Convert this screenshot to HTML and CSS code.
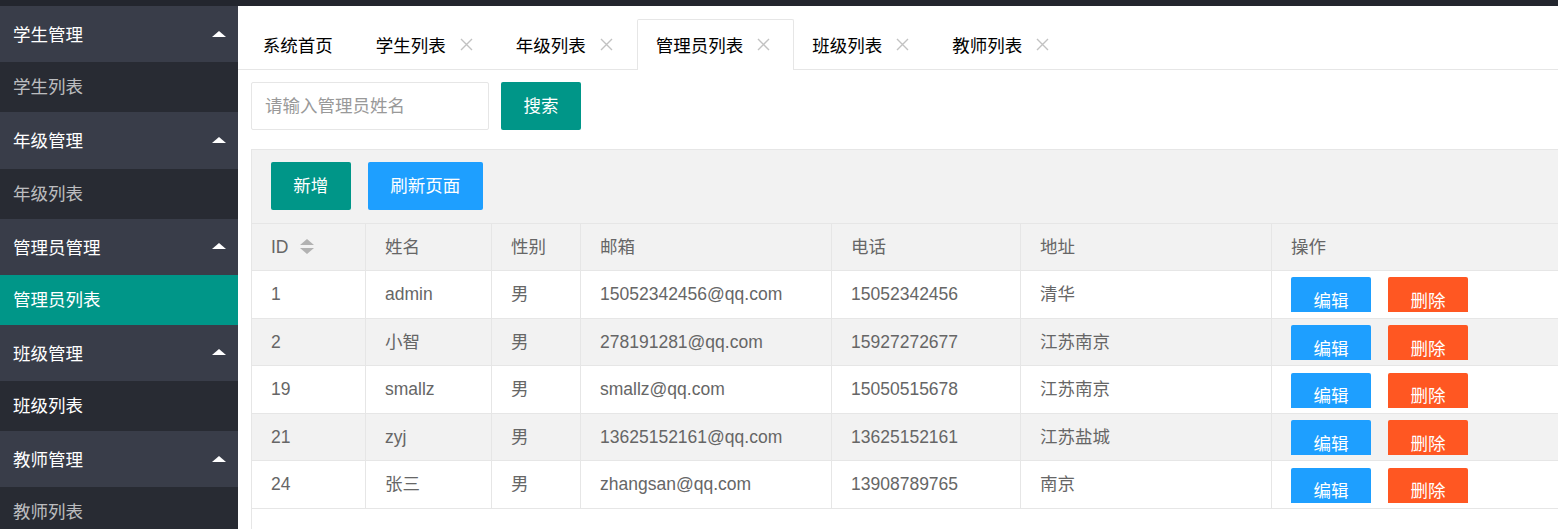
FILE: index.html
```html
<!DOCTYPE html>
<html lang="zh-CN">
<head>
    <meta charset="UTF-8">
    <title>管理员列表</title>
    <link rel="stylesheet" href="styles.css">
</head>
<body>
    <div class="topbar"></div>
    <div class="layout">
        <aside class="side">
            <div class="nav-title">学生管理<span class="caret"></span></div>
            <div class="nav-item">学生列表</div>
            <div class="nav-title">年级管理<span class="caret"></span></div>
            <div class="nav-item">年级列表</div>
            <div class="nav-title">管理员管理<span class="caret"></span></div>
            <div class="nav-item active">管理员列表</div>
            <div class="nav-title">班级管理<span class="caret"></span></div>
            <div class="nav-item hover">班级列表</div>
            <div class="nav-title">教师管理<span class="caret"></span></div>
            <div class="nav-item">教师列表</div>
        </aside>

        <main class="content">
            <ul class="tabs">
                <li class="tab tab-home">系统首页</li>
                <li class="tab">学生列表<span class="tab-close"><svg width="13" height="13" viewBox="0 0 13 13"><path d="M1 1L12 12M12 1L1 12" stroke="#c2c2c2" stroke-width="1.4" fill="none"/></svg></span></li>
                <li class="tab">年级列表<span class="tab-close"><svg width="13" height="13" viewBox="0 0 13 13"><path d="M1 1L12 12M12 1L1 12" stroke="#c2c2c2" stroke-width="1.4" fill="none"/></svg></span></li>
                <li class="tab active">管理员列表<span class="tab-close"><svg width="13" height="13" viewBox="0 0 13 13"><path d="M1 1L12 12M12 1L1 12" stroke="#c2c2c2" stroke-width="1.4" fill="none"/></svg></span></li>
                <li class="tab">班级列表<span class="tab-close"><svg width="13" height="13" viewBox="0 0 13 13"><path d="M1 1L12 12M12 1L1 12" stroke="#c2c2c2" stroke-width="1.4" fill="none"/></svg></span></li>
                <li class="tab">教师列表<span class="tab-close"><svg width="13" height="13" viewBox="0 0 13 13"><path d="M1 1L12 12M12 1L1 12" stroke="#c2c2c2" stroke-width="1.4" fill="none"/></svg></span></li>
            </ul>

            <div class="page">
                <div class="search">
                    <input class="search-input" type="text" placeholder="请输入管理员姓名">
                    <button class="btn btn-teal">搜索</button>
                </div>

                <div class="table-box">
                    <div class="toolbar">
                        <button class="btn btn-teal">新增</button>
                        <button class="btn btn-blue">刷新页面</button>
                    </div>

                    <div class="row row-head">
                        <div class="cell c-id">ID
                            <svg class="sort" width="14" height="16" viewBox="0 0 14 16"><path d="M7 0L14 6H0Z M0 9H14L7 15Z" fill="#b2b2b2"/></svg>
                        </div>
                        <div class="cell c-name">姓名</div>
                        <div class="cell c-sex">性别</div>
                        <div class="cell c-mail">邮箱</div>
                        <div class="cell c-phone">电话</div>
                        <div class="cell c-addr">地址</div>
                        <div class="cell c-ops">操作</div>
                    </div>

                    <div class="row">
                        <div class="cell c-id">1</div>
                        <div class="cell c-name">admin</div>
                        <div class="cell c-sex">男</div>
                        <div class="cell c-mail">15052342456@qq.com</div>
                        <div class="cell c-phone">15052342456</div>
                        <div class="cell c-addr">清华</div>
                        <div class="cell c-ops ops-cell"><div class="ops"><button class="btn btn-blue btn-op">编辑</button><button class="btn btn-red btn-op">删除</button></div></div>
                    </div>
                    <div class="row row-even">
                        <div class="cell c-id">2</div>
                        <div class="cell c-name">小智</div>
                        <div class="cell c-sex">男</div>
                        <div class="cell c-mail">278191281@qq.com</div>
                        <div class="cell c-phone">15927272677</div>
                        <div class="cell c-addr">江苏南京</div>
                        <div class="cell c-ops ops-cell"><div class="ops"><button class="btn btn-blue btn-op">编辑</button><button class="btn btn-red btn-op">删除</button></div></div>
                    </div>
                    <div class="row">
                        <div class="cell c-id">19</div>
                        <div class="cell c-name">smallz</div>
                        <div class="cell c-sex">男</div>
                        <div class="cell c-mail">smallz@qq.com</div>
                        <div class="cell c-phone">15050515678</div>
                        <div class="cell c-addr">江苏南京</div>
                        <div class="cell c-ops ops-cell"><div class="ops"><button class="btn btn-blue btn-op">编辑</button><button class="btn btn-red btn-op">删除</button></div></div>
                    </div>
                    <div class="row row-even">
                        <div class="cell c-id">21</div>
                        <div class="cell c-name">zyj</div>
                        <div class="cell c-sex">男</div>
                        <div class="cell c-mail">13625152161@qq.com</div>
                        <div class="cell c-phone">13625152161</div>
                        <div class="cell c-addr">江苏盐城</div>
                        <div class="cell c-ops ops-cell"><div class="ops"><button class="btn btn-blue btn-op">编辑</button><button class="btn btn-red btn-op">删除</button></div></div>
                    </div>
                    <div class="row">
                        <div class="cell c-id">24</div>
                        <div class="cell c-name">张三</div>
                        <div class="cell c-sex">男</div>
                        <div class="cell c-mail">zhangsan@qq.com</div>
                        <div class="cell c-phone">13908789765</div>
                        <div class="cell c-addr">南京</div>
                        <div class="cell c-ops ops-cell"><div class="ops"><button class="btn btn-blue btn-op">编辑</button><button class="btn btn-red btn-op">删除</button></div></div>
                    </div>
                </div>
            </div>
        </main>
    </div>
</body>
</html>
```

FILE: styles.css
```css
body {
    margin: 0;
    width: 1558px;
    height: 529px;
    overflow: hidden;
    font-family: "Liberation Sans", "Noto Sans CJK SC", sans-serif;
    font-size: 17.5px;
    background: #ffffff;
    color: #333333;
}

.topbar {
    height: 6px;
    background: #23262e;
}

.layout {
    display: flex;
    height: 523px;
    overflow: hidden;
}

/* sidebar */
.side {
    width: 238px;
    flex-shrink: 0;
    background: #282b33;
}

.nav-title {
    height: 56.25px;
    padding: 0 12px 1px 13px;
    box-sizing: border-box;
    display: flex;
    align-items: center;
    justify-content: space-between;
    background: #393d49;
    color: #ffffff;
}

.caret {
    width: 0;
    height: 0;
    border-left: 7.5px solid transparent;
    border-right: 7.5px solid transparent;
    border-bottom: 6.5px solid #ffffff;
}

.nav-item {
    height: 50px;
    line-height: 50px;
    padding-left: 13px;
    background: #282b33;
    color: rgba(255, 255, 255, 0.7);
}

.nav-item.hover {
    color: #ffffff;
}

.nav-item.active {
    background: #009688;
    color: #ffffff;
}

/* content */
.content {
    flex: 1;
    min-width: 0;
    overflow: hidden;
}

.tabs {
    list-style: none;
    margin: 13px 0 0 0;
    padding: 0 0 0 6px;
    height: 50px;
    display: flex;
    align-items: flex-start;
    border-bottom: 1px solid #e6e6e6;
}

.tab {
    height: 50px;
    box-sizing: border-box;
    padding: 0 18.75px;
    display: flex;
    align-items: center;
    color: #000000;
    white-space: nowrap;
}

.tab-home {
    margin-right: 5.5px;
}

.tab.active {
    height: 51px;
    margin-bottom: -1px;
    padding: 0 16.75px 2px 17.75px;
    background: #ffffff;
    border: 1px solid #e6e6e6;
    border-bottom: none;
    border-radius: 2px 2px 0 0;
}

.tab-close {
    display: flex;
    margin: 0 5.5px 0 14px;
}

.page {
    padding: 12px 0 0 13px;
}

.search {
    display: flex;
    gap: 12px;
    margin-bottom: 19px;
}

.search-input {
    width: 238px;
    height: 48px;
    box-sizing: border-box;
    padding: 0 13px;
    border: 1px solid #e6e6e6;
    border-radius: 2px;
    font-family: inherit;
    font-size: 17.5px;
    color: #666666;
    outline: none;
}

.search-input::placeholder {
    color: #999999;
}

.btn {
    height: 48px;
    padding: 0 22.5px;
    border: none;
    border-radius: 2px;
    font-family: inherit;
    font-size: 17.5px;
    line-height: 48px;
    color: #ffffff;
    white-space: nowrap;
}

.btn-teal {
    background: #009688;
}

.btn-blue {
    background: #1e9fff;
}

.btn-red {
    background: #ff5722;
}

/* table */
.table-box {
    width: 1400px;
    height: 420px;
    border: 1px solid #e6e6e6;
    background: #ffffff;
}

.toolbar {
    display: flex;
    gap: 17px;
    padding: 12px 18.75px 12.5px;
    background: #f2f2f2;
    border-bottom: 1px solid #e6e6e6;
}

.row {
    display: flex;
    height: 47.6px;
    box-sizing: border-box;
    border-bottom: 1px solid #e6e6e6;
    background: #ffffff;
}

.row-head,
.row-even {
    background: #f2f2f2;
}

.cell {
    box-sizing: border-box;
    padding-left: 19px;
    border-right: 1px solid #e6e6e6;
    line-height: 46.6px;
    color: #666666;
    white-space: nowrap;
    overflow: hidden;
}

.row-head .c-id {
    display: flex;
    align-items: center;
}

.sort {
    margin: 0 0 0 11.5px;
}

.c-id { width: 114px; }
.c-name { width: 126px; }
.c-sex { width: 89px; }
.c-mail { width: 251px; }
.c-phone { width: 189px; }
.c-addr { width: 251px; }
.c-ops { flex: 1; border-right: none; }

.ops-cell {
    padding-top: 6.25px;
    line-height: normal;
}

.ops {
    display: flex;
    gap: 17px;
    height: 35px;
    overflow: hidden;
}

.btn-op {
    width: 80px;
    height: 47.5px;
    padding: 0;
    line-height: 44px;
    flex-shrink: 0;
}
```
